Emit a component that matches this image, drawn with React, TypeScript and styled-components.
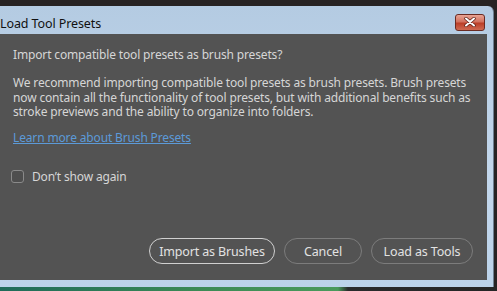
import { createGlobalStyle, styled } from "styled-components";

const Global = createGlobalStyle`
  html, body {
    margin: 0;
    padding: 0;
    background: #272323;
    overflow: hidden;
  }
  * {
    box-sizing: border-box;
  }
`;

const Page = styled.div`
  width: 497px;
  height: 291px;
  display: grid;
  grid-template-rows: 6px 1fr 4px;
  background: #272323;
`;

const Desktop = styled.div`
  background: linear-gradient(90deg, #1f6b5a 0%, #3c8a55 40%, #4a9a5c 68%, #2a2b2c 70%, #262626 100%);
`;

const Frame = styled.div`
  width: 494px;
  display: flex;
  flex-direction: column;
  background: linear-gradient(180deg, #b4cbe2 0%, #c3d7ec 60%, #bcd3ea 100%);
  border-top-right-radius: 6px;
  border-right: 1px solid #6e7f90;
  padding: 0 6px 7px 0;
`;

const TitleBar = styled.div`
  height: 28px;
  display: flex;
  align-items: center;
  justify-content: space-between;
  padding: 4px 2px 0 0;
`;

const Title = styled.span`
  font-family: "Noto Sans", "Open Sans", sans-serif;
  font-size: 12.5px;
  color: #111;
  letter-spacing: -0.1px;
  margin-top: 2px;
`;

const CloseButton = styled.div`
  width: 30px;
  height: 17px;
  border-radius: 3px;
  border: 1px solid #6b2b22;
  background: linear-gradient(180deg, #e9a494 0%, #d2725f 45%, #bb3f28 55%, #cf6a52 100%);
  display: flex;
  align-items: center;
  justify-content: center;
`;

const Content = styled.div`
  flex: 1;
  background: #535353;
  display: flex;
  flex-direction: column;
  padding: 13px 14px 16px 13px;
  font-family: "Noto Sans", "Open Sans", sans-serif;
  font-size: 12px;
  color: #d6d6d6;
  letter-spacing: -0.15px;
`;

const Question = styled.p`
  margin: 0;
  line-height: 16px;
`;

const Body = styled.p`
  margin: 13px 0 0;
  line-height: 14.5px;
`;

const Link = styled.a`
  margin-top: 10px;
  color: #5c9ad8;
  text-decoration: underline;
  line-height: 16px;
  align-self: flex-start;
`;

const CheckRow = styled.label`
  margin-top: 23px;
  display: flex;
  align-items: center;
  gap: 8px;
  margin-left: -2px;
  line-height: 16px;
`;

const Box = styled.span`
  width: 13px;
  height: 13px;
  border: 1px solid #8a8a8a;
  border-radius: 3px;
  background: #4e4e4e;
`;

const Buttons = styled.div`
  margin-top: auto;
  display: flex;
  justify-content: flex-end;
  gap: 9px;
`;

const Button = styled.div<{ $primary?: boolean; $width: number }>`
  width: ${(p) => p.$width}px;
  height: 26px;
  border-radius: 13px;
  border: ${(p) => (p.$primary ? "1.5px solid #d0d0d0" : "1px solid #7c7c7c")};
  display: flex;
  align-items: center;
  justify-content: center;
  color: #e2e2e2;
  font-size: 12.5px;
`;

export default function App() {
  return (
    <>
      <Global />
      <Page>
        <div />
        <Frame>
          <TitleBar>
            <Title>Load Tool Presets</Title>
            <CloseButton>
              <svg width="12" height="10" viewBox="0 0 12 10">
                <path d="M2 1.5 L10 8.5 M10 1.5 L2 8.5" stroke="#5a1e14" strokeWidth="3.4" strokeLinecap="round" />
                <path d="M2 1.5 L10 8.5 M10 1.5 L2 8.5" stroke="#fff" strokeWidth="2" strokeLinecap="round" />
              </svg>
            </CloseButton>
          </TitleBar>
          <Content>
            <Question>Import compatible tool presets as brush presets?</Question>
            <Body>
              We recommend importing compatible tool presets as brush presets. Brush presets
              <br />
              now contain all the functionality of tool presets, but with additional benefits such as
              <br />
              stroke previews and the ability to organize into folders.
            </Body>
            <Link>Learn more about Brush Presets</Link>
            <CheckRow>
              <Box />
              Don’t show again
            </CheckRow>
            <Buttons>
              <Button $primary $width={126}>Import as Brushes</Button>
              <Button $width={78}>Cancel</Button>
              <Button $width={102}>Load as Tools</Button>
            </Buttons>
          </Content>
        </Frame>
        <Desktop />
      </Page>
    </>
  );
}
